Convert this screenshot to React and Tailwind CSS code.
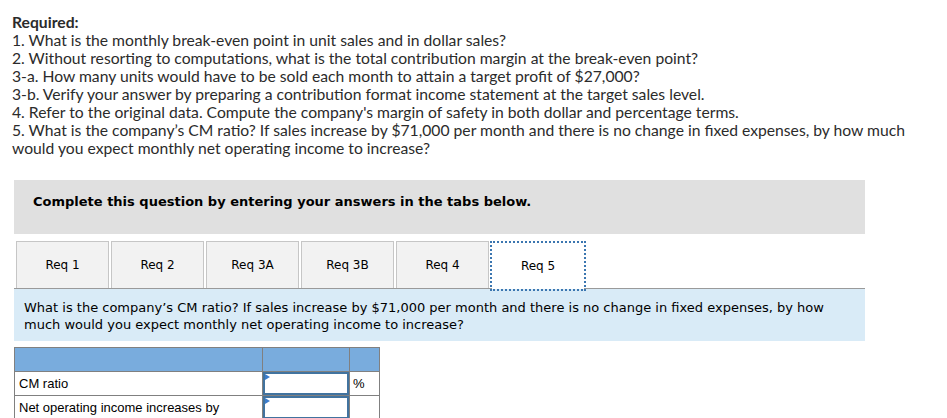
import React from 'react';

const questions = [
  '1. What is the monthly break-even point in unit sales and in dollar sales?',
  '2. Without resorting to computations, what is the total contribution margin at the break-even point?',
  '3-a. How many units would have to be sold each month to attain a target profit of $27,000?',
  '3-b. Verify your answer by preparing a contribution format income statement at the target sales level.',
  "4. Refer to the original data. Compute the company's margin of safety in both dollar and percentage terms.",
  "5. What is the company\u2019s CM ratio? If sales increase by $71,000 per month and there is no change in fixed expenses, by how much",
  'would you expect monthly net operating income to increase?',
];

const tabs = ['Req 1', 'Req 2', 'Req 3A', 'Req 3B', 'Req 4', 'Req 5'];

function InputCell() {
  return (
    <td className="border border-[#808080] p-0 h-[24px]">
      <div className="relative h-[23px] border-2 border-[#41739f] bg-white">
        <span className="absolute left-0 top-0 w-0 h-0 border-t-[3px] border-b-[3px] border-l-[5px] border-t-transparent border-b-transparent border-l-[#3b7ccc]" />
      </div>
    </td>
  );
}

export default function App() {
  return (
    <div className="bg-white w-[947px] h-[418px] overflow-hidden">
      {/* Required */}
      <div className="pl-[12px] pt-[13px] text-[15.7px] leading-[18px] text-[#2b2b2b] font-['Lato',sans-serif]">
        <div className="font-bold">Required:</div>
        {questions.map((q) => (
          <div key={q} className="whitespace-nowrap">{q}</div>
        ))}
      </div>

      {/* Instructions box */}
      <div className="ml-[14px] mt-[23px] w-[851px] h-[54px] bg-[#e0e0e0] pl-[19px] pt-[13px] text-[13px] leading-[18px] font-bold text-black font-['DejaVu_Sans',Verdana,sans-serif]">
        Complete this question by entering your answers in the tabs below.
      </div>

      {/* Tabs */}
      <div className="ml-[14px] mt-[7px] w-[851px] flex items-end border-b border-[#9a9a9a] pl-[2px] font-['DejaVu_Sans',Verdana,sans-serif] text-[12px] text-black">
        {tabs.map((t, i) =>
          i === tabs.length - 1 ? (
            <div
              key={t}
              className="w-[92px] h-[46px] ml-[1px] mb-[-1px] flex items-center justify-center bg-white outline-2 outline-dotted outline-[#3b76b0]"
            >
              {t}
            </div>
          ) : (
            <div
              key={t}
              className="w-[93px] h-[47px] mr-[2px] flex items-center justify-center bg-[#f2f2f2] border border-b-0 border-[#c6c6c6]"
            >
              {t}
            </div>
          )
        )}
      </div>

      {/* Question panel */}
      <div className="ml-[14px] w-[851px] h-[52px] bg-[#d9ebf7] pl-[10px] pt-[10px] text-[13px] leading-[17px] text-black font-['DejaVu_Sans',Verdana,sans-serif]">
        <div className="whitespace-nowrap">What is the company’s CM ratio? If sales increase by $71,000 per month and there is no change in fixed expenses, by how</div>
        <div className="whitespace-nowrap">much would you expect monthly net operating income to increase?</div>
      </div>

      {/* Answer table */}
      <table className="ml-[14px] mt-[6px] border-collapse font-['Liberation_Sans',Arial,sans-serif] text-[13px] text-black">
        <tbody>
          <tr className="bg-[#79acdd] h-[24px]">
            <td className="border border-[#808080] w-[248px]"></td>
            <td className="border border-[#808080] w-[87px]"></td>
            <td className="border border-[#808080] w-[30px]"></td>
          </tr>
          <tr>
            <td className="border border-[#808080] px-[4px] h-[24px]">CM ratio</td>
            <InputCell />
            <td className="border border-[#808080] px-[3px]">%</td>
          </tr>
          <tr>
            <td className="border border-[#808080] px-[4px] h-[24px]">Net operating income increases by</td>
            <InputCell />
            <td className="border border-[#808080]"></td>
          </tr>
        </tbody>
      </table>
    </div>
  );
}
